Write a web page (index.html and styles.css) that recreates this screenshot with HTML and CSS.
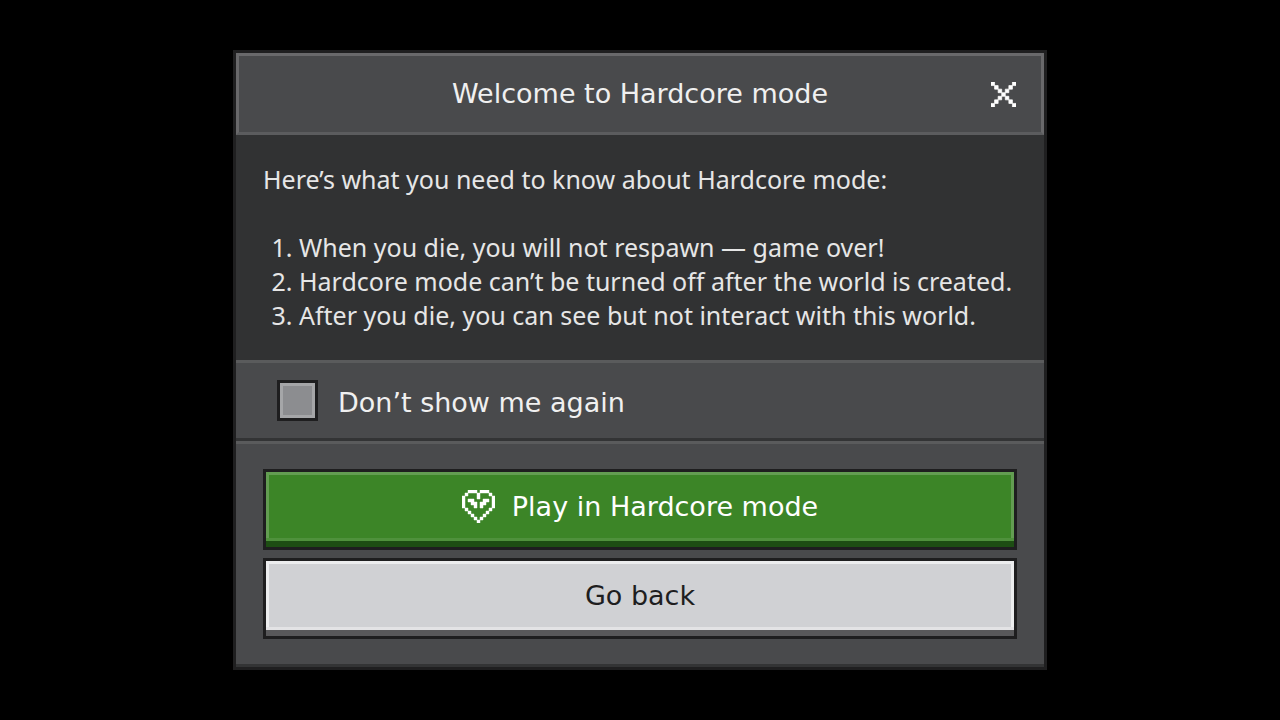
FILE: index.html
```html
<!DOCTYPE html>
<html lang="en">
<head>
  <meta charset="UTF-8">
  <meta name="viewport" content="width=device-width, initial-scale=1.0">
  <title>Hardcore mode</title>
  <link rel="stylesheet" href="styles.css">
</head>
<body>
  <main class="dialog" role="dialog" aria-labelledby="title">
    <header class="header">
      <h1 id="title">Welcome to Hardcore mode</h1>
      <button class="close" type="button" aria-label="Close">
        <svg viewBox="0 0 7 7" fill="currentColor" stroke="currentColor" stroke-width=".2">
          <path d="M0 0h1v1h-1zM6 0h1v1h-1zM1 1h1v1h-1zM5 1h1v1h-1zM2 2h1v1h-1zM4 2h1v1h-1zM3 3h1v1h-1zM2 4h1v1h-1zM4 4h1v1h-1zM1 5h1v1h-1zM5 5h1v1h-1zM0 6h1v1h-1zM6 6h1v1h-1z"/>
        </svg>
      </button>
    </header>

    <section class="content">
      <p>Here’s what you need to know about Hardcore mode:</p>
      <ol>
        <li>When you die, you will not respawn — game over!</li>
        <li>Hardcore mode can’t be turned off after the world is created.</li>
        <li>After you die, you can see but not interact with this world.</li>
      </ol>
    </section>

    <div class="option">
      <input type="checkbox" id="hide">
      <label for="hide">Don’t show me again</label>
    </div>

    <footer class="actions">
      <button class="btn play" type="button">
        <svg class="heart" viewBox="0 0 11 11" fill="currentColor" stroke="currentColor" stroke-width=".15">
          <!-- outline -->
          <path d="M2 0h3v1h-3zM6 0h3v1h-3zM1 1h1v1h-1zM5 1h1v1h-1zM9 1h1v1h-1zM0 2h1v4h-1zM10 2h1v4h-1zM1 6h1v1h-1zM9 6h1v1h-1zM2 7h1v1h-1zM8 7h1v1h-1zM3 8h1v1h-1zM7 8h1v1h-1zM4 9h1v1h-1zM6 9h1v1h-1zM5 10h1v1h-1z"/>
          <!-- eyes -->
          <path d="M2 3h2v1h1v2h-1v-1h-1v-1h-1zM9 3h-2v1h-1v2h1v-1h1v-1h1zM5 2h1v1h-1z"/>
        </svg>
        <span>Play in Hardcore mode</span>
      </button>
      <button class="btn back" type="button">Go back</button>
    </footer>
  </main>
</body>
</html>
```
FILE: styles.css
```css
* {
  box-sizing: border-box;
}
body {
  margin: 0;
  min-height: 100vh;
  display: flex;
  align-items: center;
  justify-content: center;
  background: #000;
  color: #f0f0f0;
  font-family: "DejaVu Sans", sans-serif;
  font-size: 27px;
  line-height: 34px;
}
button {
  font: inherit;
  cursor: pointer;
}
.dialog {
  width: 100%;
  max-width: 814px;
  border: 3px solid #1f1f20;
  background: #494a4c;
}
.header {
  display: grid;
  grid-template-columns: 48px 1fr 48px;
  align-items: center;
  padding: 21px 14px;
  border: 3px solid #69696b;
  border-bottom-color: #5b5c5e;
}
h1 {
  grid-column: 2;
  margin: 0;
  font-size: 27px;
  font-weight: normal;
  text-align: center;
}
.close {
  display: flex;
  justify-content: center;
  padding: 0;
  border: 0;
  background: none;
  color: #fff;
}
.close svg {
  width: 25px;
  height: 25px;
}
.content {
  padding: 27px 24px 28px 27px;
  background: #313233;
  color: #e6e6e6;
  font-family: "Noto Sans", sans-serif;
  font-size: 25px;
}
.content p {
  margin: 0 0 34px;
}
.content ol {
  margin: 0;
  padding-left: 36px;
}
.option {
  display: flex;
  align-items: center;
  gap: 20px;
  height: 81px;
  padding: 0 41px;
  border-top: 3px solid #5a5b5c;
  border-bottom: 3px solid #333435;
}
.option input {
  appearance: none;
  width: 41px;
  height: 41px;
  margin: 0;
  border: 3px solid #1e1e1f;
  background: #8c8d90;
  box-shadow: inset 0 0 0 3px #a5a6a8;
}
.option input:checked {
  background: #3c8527;
}
.option label {
  padding-top: 4px;
}
.actions {
  display: flex;
  flex-direction: column;
  gap: 8px;
  padding: 25px 27px;
  border-top: 3px solid #5a5b5c;
  border-bottom: 3px solid #333435;
}
.btn {
  display: flex;
  align-items: center;
  justify-content: center;
  gap: 17px;
  height: 81px;
  padding: 0 0 6px;
  border: 3px solid #1e1e1f;
}
.play {
  background: #3c8527;
  color: #fff;
  box-shadow: inset 0 -6px #1d4d13, inset 0 -9px #4f913c, inset 0 0 0 3px #639d52;
}
.back {
  background: #d0d1d4;
  color: #1e1e1f;
  box-shadow: inset 0 -6px #58585a, inset 0 -9px #e3e3e5, inset 0 0 0 3px #ecedee;
}
.heart {
  width: 33px;
  height: 33px;
}
```
